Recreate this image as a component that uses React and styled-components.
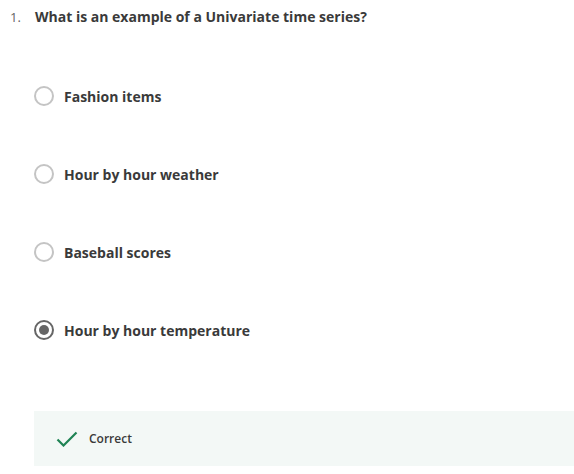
import React from "react";
import styled, { createGlobalStyle } from "styled-components";

const Global = createGlobalStyle`
  html, body { margin: 0; padding: 0; background: #fff; }
  body { font-family: "Open Sans", "Liberation Sans", sans-serif; color: #3a3a3a; }
`;

const Page = styled.div`
  width: 574px;
  height: 474px;
  overflow: hidden;
  box-sizing: border-box;
  padding: 7px 0 0 10px;
`;

const QuestionRow = styled.div`
  display: flex;
  align-items: baseline;
  height: 21px;
`;

const Num = styled.span`
  width: 25px;
  font-size: 13px;
  color: #666;
`;

const QText = styled.span`
  font-size: 14px;
  font-weight: 700;
  color: #3a3a3a;
`;

const Options = styled.div`
  display: flex;
  flex-direction: column;
  gap: 58px;
  margin: 58px 0 0 24px;
`;

const Option = styled.label`
  display: flex;
  align-items: center;
  gap: 10px;
  height: 20px;
`;

const Radio = styled.span`
  width: 20px;
  height: 20px;
  box-sizing: border-box;
  border-radius: 50%;
  border: 2px solid ${(p) => (p.checked ? "#666" : "#c4c4c4")};
  display: flex;
  align-items: center;
  justify-content: center;
  &::after {
    content: "";
    display: ${(p) => (p.checked ? "block" : "none")};
    width: 10px;
    height: 10px;
    border-radius: 50%;
    background: #666;
  }
`;

const OptText = styled.span`
  font-size: 14px;
  font-weight: 700;
  color: #3a3a3a;
`;

const Feedback = styled.div`
  margin: 71px 0 0 24px;
  height: 55px;
  background: #f3f8f6;
  display: flex;
  align-items: center;
  padding-left: 22px;
  gap: 11px;
`;

const FeedText = styled.span`
  font-size: 12px;
  font-weight: 600;
  color: #3a3a3a;
`;

const options = [
  "Fashion items",
  "Hour by hour weather",
  "Baseball scores",
  "Hour by hour temperature",
];

export default function App() {
  return (
    <Page>
      <Global />
      <QuestionRow>
        <Num>1.</Num>
        <QText>What is an example of a Univariate time series?</QText>
      </QuestionRow>
      <Options>
        {options.map((o, i) => (
          <Option key={o}>
            <Radio checked={i === 3} />
            <OptText>{o}</OptText>
          </Option>
        ))}
      </Options>
      <Feedback>
        <svg width="22" height="16" viewBox="0 0 22 16">
          <path d="M1.5 8.5 L7.5 14.5 L20.5 1.5" fill="none" stroke="#1f8354" strokeWidth="2.2" />
        </svg>
        <FeedText>Correct</FeedText>
      </Feedback>
    </Page>
  );
}
